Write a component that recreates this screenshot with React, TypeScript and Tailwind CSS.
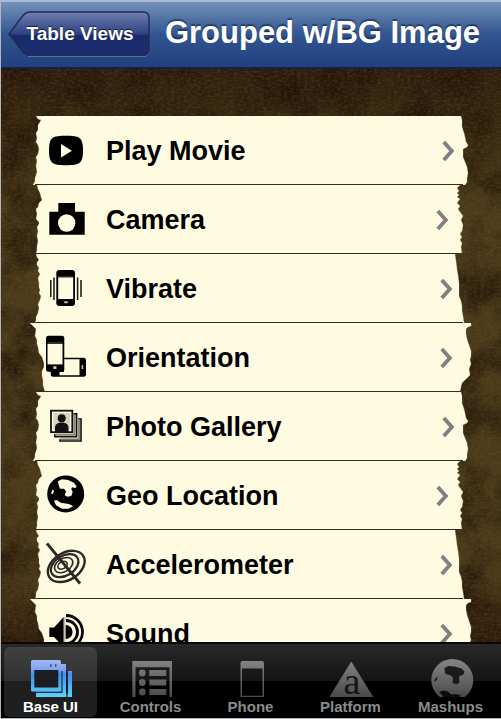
import React from "react";

const INK = "#000000";
const PAPER = "#fffbe1";

type Edge = { left: string; right: string; chevron: string };

// Four torn-paper outlines, reused in turn down the list.
const edges: Edge[] = [
  {
    left: "16,0 6,0 8,3 11,4 10,6 8,9 8,14 6,17 7,22 6,26 8,29 9,33 8,38 6,41 7,45 6,50 7,56 5,62 5,65 3,69 16,69",
    right: "0,0 7,0 8,4 8,11 10,17 11,21 12,26 14,29 13,31 9,33 9,41 11,46 13,51 14,57 13,62 13,66 11,69 0,69",
    chevron: "mr-0",
  },
  {
    left: "16,0 7,0 8,4 10,8 11,12 12,15 9,18 8,22 6,24 7,29 6,34 9,37 9,39 7,42 8,46 7,51 8,56 7,61 7,65 6,69 16,69",
    right: "0,0 6,0 3,3 5,6 3,8 5,10 3,12 6,14 3,18 6,21 4,24 6,27 9,31 7,35 9,40 8,46 6,49 8,52 6,55 8,58 7,62 8,69 0,69",
    chevron: "mr-[6px]",
  },
  {
    left: "16,0 6,0 7,3 9,6 7,8 7,11 9,14 8,17 10,20 8,24 9,29 9,33 10,36 9,39 11,42 10,46 8,50 9,54 8,59 6,63 6,66 5,69 16,69",
    right: "0,0 1,0 2,7 3,15 4,21 5,29 5,36 5,42 7,47 8,52 8,57 9,62 10,69 0,69",
    chevron: "mr-[2px]",
  },
  {
    left: "16,0 0,0 3,3 6,6 5,13 7,17 7,21 8,24 9,30 12,34 13,37 14,40 14,44 12,48 12,53 13,57 13,62 15,69 16,69",
    right: "0,0 17,0 17,3 14,4 12,6 12,11 13,16 15,22 17,28 17,33 16,37 17,41 15,46 16,52 13,55 8,60 7,64 6,69 0,69",
    chevron: "mr-[2px]",
  },
];

const IconBox = ({ children }: { children: React.ReactNode }) => (
  <svg viewBox="0 0 42 48" className="h-12 w-[42px] shrink-0" aria-hidden="true">
    {children}
  </svg>
);

const PlayIcon = () => (
  <IconBox>
    <path d="M20 9.8C33 9.8 37 11 37 24.5S33 39.2 20 39.2 3 38 3 24.5 7 9.8 20 9.8Z" fill={INK} />
    <path d="M15 18v13.5l11-6.7z" fill={PAPER} />
  </IconBox>
);

const CameraIcon = () => (
  <IconBox>
    <path d="M12.3 8H29v8.7h9.7v23H3.3v-23h9z" fill={INK} />
    <circle cx="20.7" cy="28" r="8.7" fill={PAPER} />
  </IconBox>
);

const VibrateIcon = () => (
  <IconBox>
    <rect x="10.3" y="6" width="18.7" height="36" rx="3" fill={INK} />
    <rect x="12.2" y="13.4" width="15" height="21.6" fill={PAPER} />
    <path d="M12.2 12.4h15" stroke="#555" strokeWidth=".6" />
    <rect x="18" y="37.3" width="4" height="2" rx="1" fill="#bbb8a5" />
    <path d="M8 13.5v22.5M31.6 13.5v22.5M4.8 16v17M35 16v17" stroke="#151510" strokeWidth="1.5" />
  </IconBox>
);

const OrientationIcon = () => (
  <IconBox>
    <rect x="4.7" y="24.7" width="35.3" height="19" rx="2.5" fill={INK} />
    <path d="M18 26.2h15.500v16H13.500v-3.400H18z" fill={PAPER} />
    <rect x="35.6" y="32" width="1.6" height="4" fill="#bbb8a5" />
    <rect x="0" y="2.8" width="18.3" height="36" rx="2.500" fill={INK} />
    <rect x="1.500" y="10.8" width="15" height="20.6" fill={PAPER} />
    <path d="M1.5 9.6h15" stroke="#555" strokeWidth=".6" />
    <rect x="7.4" y="33.3" width="3" height="2.6" fill="#d8d5bf" />
  </IconBox>
);

const GalleryIcon = () => (
  <IconBox>
    <path d="M14 37v2h21V17h-3" fill="none" stroke="#111" strokeWidth="1.6" />
    <path d="M14 37.3h19V17" fill="none" stroke="#77756a" strokeWidth="1.6" />
    <path d="M9 32v2.7h21.5V12h-3" fill="none" stroke="#111" strokeWidth="1.8" />
    <path d="M9 32.6h19.3V12" fill="none" stroke="#88867a" strokeWidth="1.6" />
    <rect x="5" y="8.7" width="21.3" height="21.5" fill={PAPER} stroke="#111" strokeWidth="1.8" />
    <rect x="7.3" y="11" width="16.8" height="17" fill="#d7d4be" />
    <circle cx="15.7" cy="16.2" r="4" fill="#111" />
    <path d="M9 30v-4c0-4 3-5.5 6.7-5.5s6.8 1.5 6.8 5.5v4z" fill="#111" />
  </IconBox>
);

const GlobeIcon = () => (
  <IconBox>
    <circle cx="19.7" cy="22.9" r="18.5" fill={INK} />
    <path
      d="M12 10.3 16 8.3 22 9l6 2.700 2.700 4-1.400 1.300-3.300-.7-.7 2 1.400 2.700-1.400 4-4 .7-2.600-1.400 1.300-4-2-2.600h-4l-1.300-3.400z"
      fill={PAPER}
    />
    <path d="M8 29.700l2.700-.7 4 2.700 8 1.300 4.500 2-4.500 2.800H16l-6-3.500z" fill={PAPER} />
    <path d="M6.700 18.300 8 20.300 6.700 23.300 5 22.300z" fill={PAPER} />
  </IconBox>
);

const AccelerometerIcon = () => (
  <IconBox>
    <g fill="none" stroke="#2a2923" transform="rotate(-32 20 26)">
      <ellipse cx="20" cy="26.500" rx="20" ry="13.500" strokeWidth="2.400" />
      <ellipse cx="19" cy="25" rx="15" ry="9.800" strokeWidth="2.200" />
      <ellipse cx="18.500" cy="24" rx="10" ry="6.500" strokeWidth="1.600" />
      <ellipse cx="17.500" cy="23.500" rx="5" ry="3.500" strokeWidth="1.600" />
    </g>
    <path d="M1 3.500 34 43.500" stroke="#2a2923" strokeWidth="2.800" />
  </IconBox>
);

const SoundIcon = () => (
  <IconBox>
    <path d="M3.3 18.5H8L17.6 8v30L8 28H3.3z" fill={INK} />
    <path d="M19.6 16a7 7 0 0 1 0 14z" fill={INK} />
    <path d="M20 11.5a11.5 11.5 0 0 1 0 23M20 6.5a16.5 16.5 0 0 1 0 33" fill="none" stroke={INK} strokeWidth="2.8" />
    <path d="M18.9 8v30" stroke="#88867a" strokeWidth=".8" />
  </IconBox>
);

const rows = [
  { label: "Play Movie", Icon: PlayIcon },
  { label: "Camera", Icon: CameraIcon },
  { label: "Vibrate", Icon: VibrateIcon },
  { label: "Orientation", Icon: OrientationIcon },
  { label: "Photo Gallery", Icon: GalleryIcon },
  { label: "Geo Location", Icon: GlobeIcon },
  { label: "Accelerometer", Icon: AccelerometerIcon },
  { label: "Sound", Icon: SoundIcon },
];

const TabIcon = ({ children }: { children: React.ReactNode }) => (
  <svg viewBox="0 0 48 38" className="h-[38px] w-12 shrink-0 overflow-hidden" aria-hidden="true">
    <defs>
      <linearGradient id="tabGrey" gradientUnits="userSpaceOnUse" x1="0" y1="0" x2="0" y2="38">
        <stop offset="0" stopColor="#858585" />
        <stop offset="1" stopColor="#4a4a4a" />
      </linearGradient>
      <linearGradient id="tabBlue" gradientUnits="userSpaceOnUse" x1="0" y1="0" x2="0" y2="38">
        <stop offset="0" stopColor="#a9b9f3" />
        <stop offset=".28" stopColor="#7fa2f2" />
        <stop offset=".4" stopColor="#3f8fee" />
        <stop offset="1" stopColor="#5bd3f7" />
      </linearGradient>
    </defs>
    {children}
  </svg>
);

const WindowsTab = () => (
  <TabIcon>
    <path d="M41 12h4v26H10v-3.5h31z" fill="url(#tabBlue)" />
    <path d="M34 5h5v33H9v-5.5h25z" fill="url(#tabBlue)" />
    <path d="M40 12v26" stroke="#16213a" strokeWidth="1.2" />
    <path d="M35 12v21.3H8" fill="none" stroke="#1b2c4c" strokeWidth="1.2" />
    <rect x="4" y="1" width="30" height="31.5" rx="1.5" fill="url(#tabBlue)" />
    <rect x="7.3" y="11" width="24" height="17.5" fill="#1c1e24" />
    <path d="M23 6.5h1.5M28 6.5h1.5" stroke="#33456f" strokeWidth="2.6" />
  </TabIcon>
);

const ControlsTab = () => (
  <TabIcon>
    <path fillRule="evenodd" d="M5.3 2H45v37H5.3zM8.5 8.3V39h34V8.3z" fill="url(#tabGrey)" />
    <g fill="url(#tabGrey)">
      <circle cx="15.3" cy="14" r="3.4" />
      <circle cx="15.3" cy="23.5" r="3.4" />
      <circle cx="15.3" cy="33" r="3.4" />
      <rect x="22.3" y="11" width="17" height="6" />
      <rect x="22.3" y="20.5" width="17" height="6" />
      <rect x="22.3" y="30" width="17" height="6" />
    </g>
  </TabIcon>
);

const PhoneTab = () => (
  <TabIcon>
    <path
      fillRule="evenodd"
      d="M15.5 2h19.5a2 2 0 0 1 2 2v35H13.5V4a2 2 0 0 1 2-2zM15 9.5V36.8h20.5V9.5z"
      fill="url(#tabGrey)"
    />
  </TabIcon>
);

const PlatformTab = () => (
  <TabIcon>
    <path d="M24.3 2.5 46.3 38h-44z" fill="url(#tabGrey)" />
    <text x="25" y="35" textAnchor="middle" fontSize="38" fontWeight="400" fill="#151515" className="font-['Liberation_Serif',serif]">
      a
    </text>
  </TabIcon>
);

const MashupsTab = () => (
  <TabIcon>
    <circle cx="25.3" cy="21" r="21" fill="url(#tabGrey)" />
    <path d="M17.5 9l4-2 6 .5 7 2 3 3-1 3-4 1.5-.5 3 .5 3.500-3 2-4-1.500.5-5-2-2.500-4-1-2-1.500z" fill="#1b1b1b" />
    <path d="M12 33l4-1.5 5 1 3 3 5-.5 5 1.5-3 3-12 1z" fill="#0c0c0c" />
    <path d="M8 20l2.500-2.500-.5 3.500-3 2z" fill="#1b1b1b" />
  </TabIcon>
);

const tabs = [
  { label: "Base UI", Icon: WindowsTab },
  { label: "Controls", Icon: ControlsTab },
  { label: "Phone", Icon: PhoneTab },
  { label: "Platform", Icon: PlatformTab },
  { label: "Mashups", Icon: MashupsTab },
];

const BackButton = () => (
  <button
    type="button"
    className="relative h-[46px] w-[142px] shrink-0 pr-4 pl-[18px] text-[19px] leading-none font-bold whitespace-nowrap text-white [text-shadow:0_-1px_1px_rgba(0,0,0,0.6)]"
  >
    <svg viewBox="0 0 142 46" preserveAspectRatio="none" className="absolute inset-0 h-full w-full" aria-hidden="true">
      <defs>
        <linearGradient id="back" x1="0" y1="0" x2="0" y2="1">
          <stop offset="0" stopColor="#6f7fae" />
          <stop offset=".5" stopColor="#2f4285" />
          <stop offset=".54" stopColor="#1a2b6c" />
          <stop offset="1" stopColor="#1c2c6e" />
        </linearGradient>
      </defs>
      <path d="M20 45.500h115q5 0 6-5" fill="none" stroke="#6d86b8" strokeWidth="1" />
      <path
        d="M1 23 15 4.5Q18 1 22 1H135Q141 1 141 7V38Q141 44.5 135 44.5H22Q18 44.5 15 41Z"
        fill="url(#back)"
        stroke="#1d2c50"
        strokeWidth="1.4"
      />
    </svg>
    <span className="relative">Table Views</span>
  </button>
);

const Backdrop = () => (
  <svg className="absolute inset-0 h-full w-full" aria-hidden="true">
    <defs>
      <linearGradient id="leather" x1="0" y1="0" x2="0" y2="1">
        <stop offset="0" stopColor="#2e1e0f" />
        <stop offset=".08" stopColor="#35260f" />
        <stop offset=".25" stopColor="#4b3b1b" />
        <stop offset=".88" stopColor="#493919" />
        <stop offset="1" stopColor="#2e1b0c" />
      </linearGradient>
      <filter id="blotch" x="0" y="0" width="100%" height="100%" colorInterpolationFilters="sRGB">
        <feTurbulence type="fractalNoise" baseFrequency=".025" numOctaves="4" seed="7" />
        <feColorMatrix values="0 0 0 0 .12  0 0 0 0 .06  0 0 0 0 .02  1.8 0 0 0 -.7" />
      </filter>
      <filter id="weave" x="0" y="0" width="100%" height="100%" colorInterpolationFilters="sRGB">
        <feTurbulence type="fractalNoise" baseFrequency=".3 .45" numOctaves="2" seed="3" />
        <feColorMatrix values="0 0 0 0 .42  0 0 0 0 .34  0 0 0 0 .18  0 .8 0 0 -.32" />
      </filter>
    </defs>
    <rect width="100%" height="100%" fill="url(#leather)" />
    <rect width="100%" height="100%" filter="url(#blotch)" />
    <rect width="100%" height="100%" filter="url(#weave)" />
  </svg>
);

export default function App() {
  return (
    <div className="flex h-screen flex-col overflow-hidden border-b border-l border-[#b4b6ba] bg-black font-['Liberation_Sans',Arial,sans-serif]">
      <header className="flex h-[69px] shrink-0 items-center border-t-2 border-b-2 border-t-[#a9bad6] border-b-[#14233f] bg-linear-to-b from-[#7391bb] via-[#31558f] via-50% to-[#223f80] pr-3 pb-[2px] pl-[7px]">
        <BackButton />
        <h1 className="flex-1 pb-[2px] pl-[6px] text-center text-[31px] leading-none font-bold whitespace-nowrap text-white [text-shadow:0_-2px_1px_rgba(20,35,70,0.6)]">
          Grouped w/BG Image
        </h1>
      </header>

      <main className="relative min-h-0 flex-1 overflow-hidden">
        <Backdrop />
        <ul className="relative mt-[47px] mr-[29px] ml-[29px]">
          {rows.map(({ label, Icon }, i) => {
            const edge = edges[i % edges.length];
            return (
              <li key={label}>
                <button type="button" className="flex h-[69px] w-full text-left">
                  <svg viewBox="0 0 16 69" className="h-[69px] w-4 shrink-0" aria-hidden="true">
                    <polygon points={edge.left} fill={PAPER} stroke="#cfc49a" strokeOpacity=".5" strokeWidth=".6" />
                    <path d="M5 68.5H16" stroke="#3a2c20" />
                    <path d="M15 0v68h1V0z" fill={PAPER} />
                  </svg>
                  <span className="flex min-w-0 flex-1 items-center border-b border-[#3a2c20] bg-[#fffbe1]">
                    <Icon />
                    <span className="flex-1 pt-[2px] pl-[18px] text-[27px] leading-8 font-bold whitespace-nowrap text-black">{label}</span>
                    <svg
                      viewBox="0 0 12 22"
                      className={"mt-[2px] h-[22px] w-3 shrink-0 " + edge.chevron}
                      fill="none"
                      stroke="#808080"
                      strokeWidth="3.8"
                      aria-hidden="true"
                    >
                      <path d="M1.8 2 9.8 11l-8 9" />
                    </svg>
                  </span>
                  <svg viewBox="0 0 18 69" className="h-[69px] w-[18px] shrink-0" aria-hidden="true">
                    <polygon points={edge.right} fill={PAPER} stroke="#cfc49a" strokeOpacity=".5" strokeWidth=".6" />
                    <path d="M0 68.5H9" stroke="#3a2c20" />
                    <path d="M0 0h1v68H0z" fill={PAPER} />
                  </svg>
                </button>
              </li>
            );
          })}
        </ul>
      </main>

      <nav className="grid h-[76px] shrink-0 grid-cols-5 border-t-2 border-[#080808] bg-linear-to-b from-[#292929] from-0% via-[#141414] via-50% to-black to-50%">
        {tabs.map(({ label, Icon }, i) => (
          <button
            key={label}
            type="button"
            aria-current={i === 0 ? "page" : undefined}
            className={
              "mr-1 ml-[3px] mt-[3px] mb-[1px] flex flex-col items-center rounded-md pt-3 text-[15px] leading-5 font-bold " +
              (i === 0 ? "bg-white/12 text-white" : "text-[#8b8b8b]")
            }
          >
            <Icon />
            {label}
          </button>
        ))}
      </nav>
    </div>
  );
}
